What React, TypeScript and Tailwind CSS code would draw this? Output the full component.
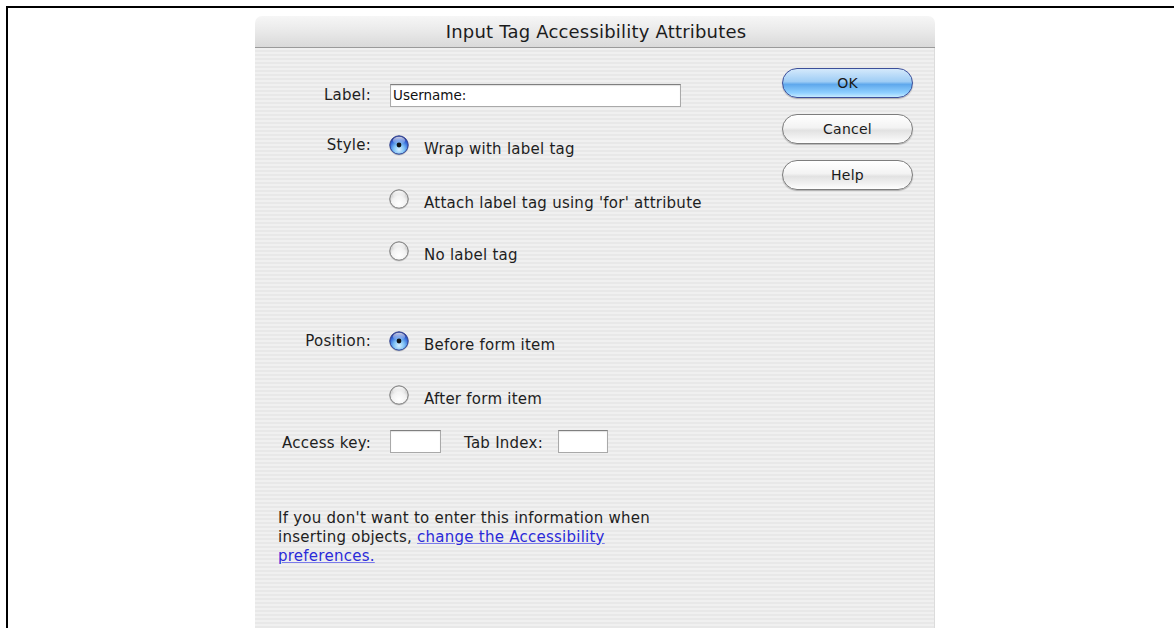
import React from "react";

const FONT = "font-['DejaVu_Sans','Liberation_Sans',sans-serif]";

function Radio({ checked }: { checked: boolean }) {
  const id = checked ? "rOn" : "rOff";
  return (
    <svg width="22" height="22" viewBox="0 0 22 22" className="shrink-0">
      <defs>
        <radialGradient id={`${id}-fill`} cx="50%" cy="75%" r="65%">
          {checked ? (
            <>
              <stop offset="0%" stopColor="#d8f0ff" />
              <stop offset="45%" stopColor="#7cc0f5" />
              <stop offset="85%" stopColor="#2f63d6" />
              <stop offset="100%" stopColor="#2a3f9e" />
            </>
          ) : (
            <>
              <stop offset="0%" stopColor="#ffffff" />
              <stop offset="60%" stopColor="#f2f2f2" />
              <stop offset="100%" stopColor="#c8c8c8" />
            </>
          )}
        </radialGradient>
        <linearGradient id={`${id}-gloss`} x1="0" y1="0" x2="0" y2="1">
          <stop offset="0%" stopColor="#ffffff" stopOpacity={checked ? 0.75 : 0.9} />
          <stop offset="100%" stopColor="#ffffff" stopOpacity="0" />
        </linearGradient>
      </defs>
      <circle cx="11" cy="11.9" r="9.7" fill="#000" opacity="0.16" />
      <circle
        cx="11"
        cy="11"
        r="9.2"
        fill={`url(#${id}-fill)`}
        stroke={checked ? "#2e3f8f" : "#7c7c7c"}
        strokeWidth="1"
      />
      <ellipse cx="11" cy="6.6" rx="6.2" ry="3.8" fill={`url(#${id}-gloss)`} />
      {checked && <circle cx="11" cy="11" r="2.4" fill="#111" />}
    </svg>
  );
}

function AquaButton({ label, primary }: { label: string; primary?: boolean }) {
  return (
    <button
      className={
        "w-[131px] h-[30px] rounded-full text-[14px] text-[#1a1a1a] flex items-center justify-center shadow-[0_1px_1px_rgba(0,0,0,0.25)] " +
        (primary
          ? "border border-[#3c4f9a] bg-[linear-gradient(180deg,#d4e9fb_0%,#9fcdf5_45%,#5fa8ec_55%,#8fd0ff_85%,#c5ebff_100%)]"
          : "border border-[#7d7d7d] bg-[linear-gradient(180deg,#ffffff_0%,#f3f3f3_45%,#e2e2e2_55%,#f4f4f4_85%,#ffffff_100%)]")
      }
    >
      {label}
    </button>
  );
}

function TextBox({ value, className }: { value?: string; className: string }) {
  return (
    <div
      className={
        "h-[23px] bg-white border border-[#a9a9a9] border-t-[#7f7f7f] shadow-[inset_0_1px_1px_rgba(0,0,0,0.12)] text-[13.5px] leading-[21px] pl-[2px] text-[#111] " +
        className
      }
    >
      {value}
    </div>
  );
}

function Option({ checked, text }: { checked: boolean; text: string }) {
  return (
    <div className="flex items-center h-[22px]">
      <Radio checked={checked} />
      <span className="ml-[14px] pt-[8px] whitespace-nowrap">{text}</span>
    </div>
  );
}

export default function App() {
  return (
    <div className={`w-[1174px] h-[628px] bg-white overflow-hidden ${FONT}`}>
      <div className="mt-[6px] ml-[6px] h-[622px] border-t-[2px] border-l-[2px] border-black">
        <div className="ml-[247px] mt-[8px] w-[680px] h-[612px] flex flex-col">
          {/* title bar */}
          <div className="h-[32px] rounded-t-[7px] border-b border-[#9a9a9a] bg-[linear-gradient(180deg,#f6f6f6_0%,#e9e9e9_50%,#d9d9d9_100%)] flex items-center justify-center text-[18px] tracking-[0.2px] text-[#1c1c1c] pl-[2px] pb-[1px]">
            Input Tag Accessibility Attributes
          </div>

          {/* body */}
          <div className="flex-1 flex border-r border-[#dcdcdc] bg-[repeating-linear-gradient(180deg,#f0f0f0_0px,#f0f0f0_2px,#e8e8e8_2px,#e8e8e8_4px)] text-[15px] tracking-[0.25px] text-[#1e1e1e]">
            <div className="w-[527px] pt-[36px]">
              <div className="grid grid-cols-[116px_1fr] gap-x-[17px] items-center">
                <div className="text-right h-[22px] leading-[22px]">Label:</div>
                <div className="h-[22px]">
                  <TextBox value="Username:" className="ml-[2px] w-[291px] h-[22px] tracking-normal" />
                </div>

                <div className="text-right mt-[28px] h-[22px] leading-[22px]">Style:</div>
                <div className="mt-[28px]">
                  <Option checked text="Wrap with label tag" />
                </div>

                <div className="mt-[32px]" />
                <div className="mt-[32px]">
                  <Option checked={false} text="Attach label tag using 'for' attribute" />
                </div>

                <div className="mt-[30px]" />
                <div className="mt-[30px]">
                  <Option checked={false} text="No label tag" />
                </div>

                <div className="text-right mt-[68px] h-[22px] leading-[22px]">Position:</div>
                <div className="mt-[68px]">
                  <Option checked text="Before form item" />
                </div>

                <div className="mt-[32px]" />
                <div className="mt-[32px]">
                  <Option checked={false} text="After form item" />
                </div>

                <div className="text-right mt-[23px] h-[23px] leading-[26px] whitespace-nowrap">Access key:</div>
                <div className="mt-[23px] flex items-center">
                  <TextBox className="ml-[2px] w-[51px]" />
                  <span className="ml-[23px] mr-[15px] pt-[3px] whitespace-nowrap">Tab Index:</span>
                  <TextBox className="w-[50px]" />
                </div>
              </div>

              <p className="ml-[23px] mt-[54px] w-[400px] leading-[19px]">
                If you don't want to enter this information when inserting objects,{" "}
                <a href="#" className="text-[#2a2ad8] underline decoration-[#7a7aea]">
                  change the Accessibility preferences.
                </a>
              </p>
            </div>

            <div className="pt-[20px] flex flex-col gap-[16px]">
              <AquaButton label="OK" primary />
              <AquaButton label="Cancel" />
              <AquaButton label="Help" />
            </div>
          </div>
        </div>
      </div>
    </div>
  );
}
